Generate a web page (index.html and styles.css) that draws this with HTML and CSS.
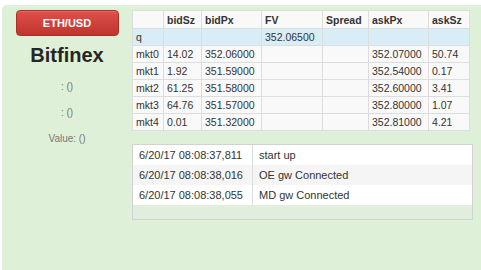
FILE: index.html
```html
<!DOCTYPE html>
<html>
<head>
    <title>Bitfinex ETH/USD</title>
    <link rel="stylesheet" href="styles.css">
</head>
<body>
    <div class="panel">
        <div class="side">
            <button class="btn-danger">ETH/USD</button>
            <h2 class="exchange">Bitfinex</h2>
            <div class="stat">: ()</div>
            <div class="stat">: ()</div>
            <div class="stat">Value: ()</div>
        </div>
        <div class="main">
            <table class="book">
                <colgroup>
                    <col style="width:31px">
                    <col style="width:38px">
                    <col style="width:60px">
                    <col style="width:61px">
                    <col style="width:46px">
                    <col style="width:60px">
                    <col style="width:41px">
                </colgroup>
                <thead>
                    <tr><th></th><th>bidSz</th><th>bidPx</th><th>FV</th><th>Spread</th><th>askPx</th><th>askSz</th></tr>
                </thead>
                <tbody>
                    <tr class="info"><td>q</td><td></td><td></td><td>352.06500</td><td></td><td></td><td></td></tr>
                    <tr><td>mkt0</td><td>14.02</td><td>352.06000</td><td></td><td></td><td>352.07000</td><td>50.74</td></tr>
                    <tr><td>mkt1</td><td>1.92</td><td>351.59000</td><td></td><td></td><td>352.54000</td><td>0.17</td></tr>
                    <tr><td>mkt2</td><td>61.25</td><td>351.58000</td><td></td><td></td><td>352.60000</td><td>3.41</td></tr>
                    <tr><td>mkt3</td><td>64.76</td><td>351.57000</td><td></td><td></td><td>352.80000</td><td>1.07</td></tr>
                    <tr><td>mkt4</td><td>0.01</td><td>351.32000</td><td></td><td></td><td>352.81000</td><td>4.21</td></tr>
                </tbody>
            </table>
            <div class="log">
                <table class="log-table">
                    <tr><td class="ts">6/20/17 08:08:37,811</td><td>start up</td></tr>
                    <tr><td class="ts">6/20/17 08:08:38,016</td><td>OE gw Connected</td></tr>
                    <tr><td class="ts">6/20/17 08:08:38,055</td><td>MD gw Connected</td></tr>
                </table>
            </div>
        </div>
    </div>
</body>
</html>
```

FILE: styles.css
```css
body {
    margin: 0;
    font-family: "Liberation Sans", Arial, sans-serif;
    color: #333;
    background: #fff;
}
.panel {
    display: flex;
    margin: 5px 0 0 2px;
    padding-top: 5px;
    height: 260px;
    overflow: hidden;
    background: #dff0d8;
    border-radius: 5px 0 0 0;
}
.side {
    width: 130px;
    display: flex;
    flex-direction: column;
    align-items: center;
}
.btn-danger {
    width: 103px;
    height: 26px;
    padding: 0;
    font-family: "Liberation Sans", Arial, sans-serif;
    font-size: 11px;
    font-weight: bold;
    color: #fff;
    background: linear-gradient(#e0504b, #bf342e);
    border: 1px solid #b02e29;
    border-radius: 4px;
    box-shadow: inset 0 1px 0 rgba(255,255,255,0.15);
}
.exchange {
    margin: 7px 0 0;
    font-size: 20px;
    line-height: 24px;
    font-weight: bold;
    color: #262626;
}
.stat {
    margin-top: 12px;
    font-size: 10px;
    line-height: 14px;
    color: #777;
}
.stat:first-of-type {
    margin-top: 13px;
}
.main {
    width: 341px;
}
.book {
    width: 337px;
    table-layout: fixed;
    border-collapse: collapse;
    font-size: 10.5px;
    background: #f9f9f9;
}
.book th, .book td {
    border: 1px solid #ddd;
    padding: 0 3px;
    text-align: left;
    white-space: nowrap;
    overflow: hidden;
}
.book th {
    height: 17px;
    font-weight: bold;
}
.book td {
    height: 16px;
}
.book tr.info td {
    background: #d9edf7;
}
.log {
    margin-top: 13px;
    border: 1px solid #d2d2d2;
    background: #e2eedd;
    padding-bottom: 14px;
}
.log-table {
    width: 100%;
    border-collapse: collapse;
    font-size: 11px;
}
.log-table td {
    height: 20px;
    padding: 0 6px;
    background: #fff;
}
.log-table tr:nth-child(2) td {
    background: #f5f5f5;
}
.log-table .ts {
    width: 107px;
    border-right: 1px solid #ddd;
}
```
